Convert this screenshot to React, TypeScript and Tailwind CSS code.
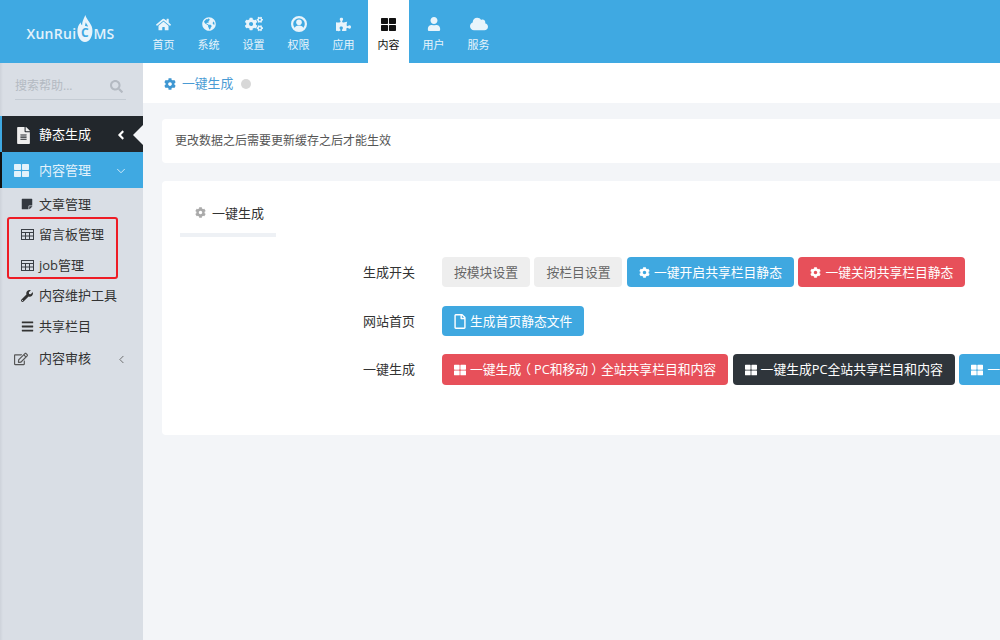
import type { ReactNode } from 'react';
import {
  FaAngleLeft,
  FaBars,
  FaCloud,
  FaCog,
  FaCogs,
  FaFileAlt,
  FaGlobeAmericas,
  FaHome,
  FaPuzzlePiece,
  FaRegEdit,
  FaRegFile,
  FaSearch,
  FaStickyNote,
  FaThLarge,
  FaUser,
  FaWrench,
} from 'react-icons/fa';
import { ChevronDown, ChevronLeft } from 'lucide-react';

const font = 'font-["Open_Sans","Noto_Sans_CJK_SC",sans-serif]';

// outlined table glyph, the package ones have a solid header
function TableIcon() {
  return (
    <svg viewBox="0 0 13 11" className="h-[11px] w-[13px]" fill="none" stroke="#3a3f45" strokeWidth="1">
      <rect x="0.5" y="0.5" width="12" height="10" />
      <path d="M0.500 3.500h12M0.500 7h12M4.500 3.500v7M8.500 3.500v7" />
    </svg>
  );
}

// thick ring with head and shoulders
function UserRingIcon() {
  return (
    <svg viewBox="0 0 16 16" className="h-[16px] w-[16px]">
      <circle cx="8" cy="8" r="6.900" fill="none" stroke="currentColor" strokeWidth="2.200" />
      <circle cx="8" cy="6.200" r="2.800" fill="currentColor" />
      <path d="M3.500 13c.4-2.600 2-3.500 4.500-3.500s4.100.9 4.500 3.500c-1.200 1-2.800 1.500-4.500 1.500s-3.300-.5-4.500-1.500z" fill="currentColor" />
    </svg>
  );
}

const navItems = [
  { label: '首页', icon: <FaHome size={15} /> },
  { label: '系统', icon: <FaGlobeAmericas size={14} /> },
  { label: '设置', icon: <FaCogs size={18} /> },
  { label: '权限', icon: <UserRingIcon /> },
  { label: '应用', icon: <FaPuzzlePiece size={15} /> },
  { label: '内容', icon: <FaThLarge size={15} />, active: true },
  { label: '用户', icon: <FaUser size={14} /> },
  { label: '服务', icon: <FaCloud size={18} /> },
];

const subItems = [
  { label: '文章管理', icon: <FaStickyNote size={12} className="text-[#33383f]" /> },
  { label: '留言板管理', icon: <TableIcon /> },
  { label: 'job管理', icon: <TableIcon /> },
  { label: '内容维护工具', icon: <FaWrench size={12} /> },
  { label: '共享栏目', icon: <FaBars size={13} /> },
];

function Btn({ color, icon, children }: { color: string; icon?: ReactNode; children: ReactNode }) {
  return (
    <span className={`flex h-full shrink-0 items-center gap-[4px] rounded-[4px] px-[12px] pt-[1px] text-[12.800px] whitespace-nowrap ${color}`}>
      {icon}
      <span>{children}</span>
    </span>
  );
}

function Row({ label, className, children }: { label: string; className: string; children: ReactNode }) {
  return (
    <div className={`flex items-center ${className}`}>
      <span className="w-[79px] shrink-0 pt-[1px] text-[13px] text-[#333]">{label}</span>
      <div className="flex h-full gap-[4.500px]">{children}</div>
    </div>
  );
}

const blue = 'bg-[#3fa8e0] text-white';
const red = 'bg-[#e7505a] text-white';
const dark = 'bg-[#2f353b] text-white';
const gray = 'bg-[#eeeeee] text-[#666]';

export default function App() {
  return (
    <div className={`flex h-[640px] w-[1000px] flex-col overflow-hidden bg-[#f3f5f8] ${font}`}>
      <header className="flex h-[63px] shrink-0 bg-[#3fa9e2] text-[#e8f4fb]">
        <div className="flex w-[143px] shrink-0 items-center justify-center pr-[2px] pt-[3px] text-[14px] font-semibold tracking-[0.3px] text-[#e3f2fb]">
          <span>XunRui</span>
          <span className="relative mx-[0.500px] -mt-[9px] flex h-[27px] w-[16px] items-end justify-center">
            <svg viewBox="0 0 18 24" className="absolute inset-0 h-[27px] w-[16px]" preserveAspectRatio="none">
              <path
                fill="#e8f4fb"
                d="M9.500 0c.8 3.500 5 6 7 10 2.500 5.500-.5 14-7.500 14S-1 16 1.200 10.500c.7-1.800 2-2.500 2.800-4 .4 1.500.8 2.200 1.800 2.700C5.500 6 7.500 3.500 9.500 0z"
              />
              <path fill="#3fa9e2" d="M10 6.500c.5 1.500 2 2.500 2.500 4-1-.6-2.200-.9-3.500-.8.200-1.200.5-2.200 1-3.200z" />
            </svg>
            <span className="relative mb-[3px] text-[12px] font-bold leading-none text-[#3fa9e2]">C</span>
          </span>
          <span>MS</span>
        </div>
        <nav className="flex gap-[4px]">
          {navItems.map((item) => (
            <div
              key={item.label}
              className={`flex w-[41px] flex-col items-center pt-[15px] text-[11px] ${item.active ? 'bg-white text-[#111]' : ''}`}
            >
              <span className="flex h-[18px] items-center">{item.icon}</span>
              <span className="mt-[3px] leading-[18px]">{item.label}</span>
            </div>
          ))}
        </nav>
      </header>

      <div className="flex min-h-0 flex-1">
        <aside className="w-[143px] shrink-0 bg-[#d9dee5] bg-[linear-gradient(to_right,#cdd2da,#d9dee5_3px)] text-[13px] text-[#333]">
          <div className="mb-[16px] ml-[15px] mr-[17px] mt-[9px] flex h-[28px] items-center justify-between border-b border-[#c4cbd3] pr-[3px] text-[#b4bac2]">
            <span className="pt-[1px] text-[12px]">搜索帮助...</span>
            <FaSearch size={13} className="mt-[2px]" />
          </div>
          <div className="relative flex h-[36px] items-center border-l-2 border-[#3fa9e2] bg-[#22272c] pl-[13px] pt-[2px] text-white">
            <span className="w-[24px]">
              <FaFileAlt size={17} className="text-[#eee]" />
            </span>
            <span>静态生成</span>
            <FaAngleLeft size={14} className="absolute right-[15px]" />
            <span className="absolute right-0 h-0 w-0 border-y-[10px] border-r-[10px] border-y-transparent border-r-[#f3f5f8]" />
          </div>
          <div className="relative flex h-[36px] items-center border-l-2 border-[#111] bg-[#3fa9e2] pl-[12px] pt-[1px] text-[#e3f2fb]">
            <span className="w-[25px]">
              <FaThLarge size={15} />
            </span>
            <span>内容管理</span>
            <ChevronDown size={14} strokeWidth={1.500} className="absolute right-[15px]" />
          </div>
          <ul className="pt-[1px]">
            {subItems.map((item) => (
              <li key={item.label} className="flex h-[30.500px] items-center pl-[21px]">
                <span className="flex w-[18px] justify-start">{item.icon}</span>
                <span>{item.label}</span>
              </li>
            ))}
          </ul>
          <div className="relative flex h-[35px] items-center pl-[14px]">
            <span className="w-[25px]">
              <FaRegEdit size={14} className="text-[#555]" />
            </span>
            <span>内容审核</span>
            <ChevronLeft size={13} strokeWidth={1.500} className="absolute right-[15px] text-[#555]" />
          </div>
        </aside>

        <main className="min-w-0 flex-1">
          <div className="flex h-[40px] items-center gap-[6px] bg-white pl-[21px] pt-[2px] text-[12.800px] text-[#4a9bd4]">
            <FaCog size={12} className="text-[#3f97d2]" />
            <span>一键生成</span>
            <span className="ml-[2px] h-[10px] w-[10px] rounded-full bg-[#d8d8d8]" />
          </div>

          <div className="ml-[19px] mr-[-20px] mt-[16px] flex h-[44px] items-center rounded-[4px] bg-white pl-[13px] text-[12px] text-[#555]">
            更改数据之后需要更新缓存之后才能生效
          </div>

          <section className="ml-[19px] mr-[-20px] mt-[18px] h-[254px] rounded-[4px] bg-white pl-[18px] pt-[14px]">
            <div className="flex h-[42px] w-[96px] items-start gap-[6px] border-b-4 border-[#eef1f5] pl-[15px] pt-[9px] text-[13px] leading-[18px] text-[#333]">
              <FaCog size={11} className="mt-[3px] text-[#aaa]" />
              <span>一键生成</span>
            </div>
            <div className="ml-[183px] mt-[20px] overflow-hidden">
              <Row label="生成开关" className="h-[30px]">
                <Btn color={gray}>按模块设置</Btn>
                <Btn color={gray}>按栏目设置</Btn>
                <Btn color={blue} icon={<FaCog size={11} />}>一键开启共享栏目静态</Btn>
                <Btn color={red} icon={<FaCog size={11} />}>一键关闭共享栏目静态</Btn>
              </Row>
              <Row label="网站首页" className="mt-[19px] h-[30px]">
                <Btn color={blue} icon={<FaRegFile size={15} className="w-[12px]" />}>生成首页静态文件</Btn>
              </Row>
              <Row label="一键生成" className="mt-[18px] h-[31px]">
                <Btn color={red} icon={<FaThLarge size={12} />}>
                  一键生成<span className="inline-block -translate-x-[3px]">（</span>PC和移动<span className="inline-block translate-x-[3px]">）</span>全站共享栏目和内容
                </Btn>
                <Btn color={dark} icon={<FaThLarge size={12} />}>一键生成PC全站共享栏目和内容</Btn>
                <Btn color={blue} icon={<FaThLarge size={12} />}>一键生成移动端全站共享栏目和内容</Btn>
              </Row>
            </div>
          </section>
        </main>
      </div>

      <div className="absolute left-[7px] top-[217px] h-[62px] w-[111px] rounded-[3px] border-2 border-[#ee1c25]" />
    </div>
  );
}
